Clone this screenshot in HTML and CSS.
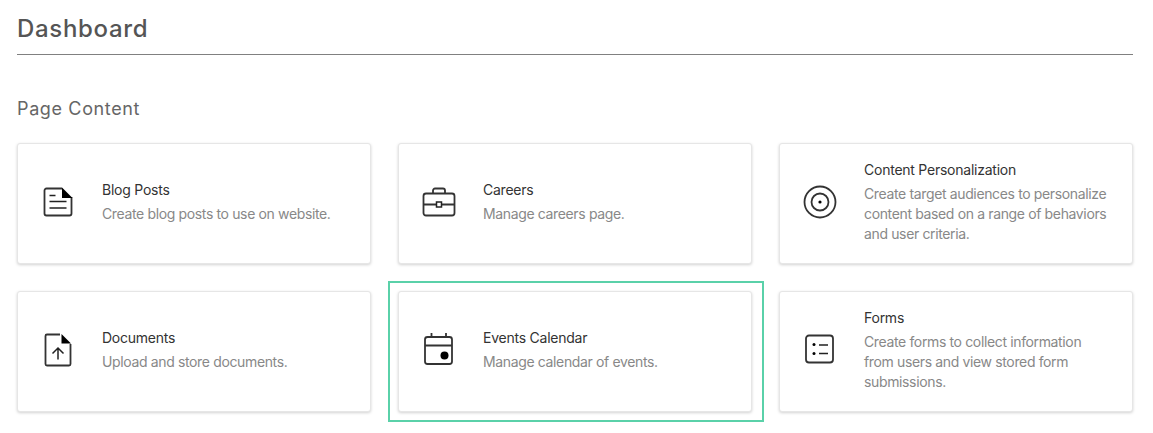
FILE: index.html
```html
<!DOCTYPE html>
<html lang="en">
<head>
<meta charset="utf-8">
<title>Dashboard</title>
<link rel="stylesheet" href="styles.css">
</head>
<body>
<main class="page">
  <h1 class="page-title">Dashboard</h1>
  <h2 class="section-title">Page Content</h2>
  <section class="grid">
    <a class="card">
      <svg class="icon" viewBox="0 0 36 36"><path class="s" d="M22 4.500H6.500a2 2 0 0 0-2 2v23a2 2 0 0 0 2 2h23a2 2 0 0 0 2-2V13"/><path class="f" d="M22 3.500 32.500 14H22z"/><path class="t" d="M9.500 11.500h6M9.500 17.500h17M9.500 24h17"/></svg>
      <div class="body"><h3 class="name">Blog Posts</h3><p class="desc">Create blog posts to use on website.</p></div>
    </a>
    <a class="card">
      <svg class="icon" viewBox="0 0 36 36"><rect class="s" x="2.500" y="9.500" width="31" height="22" rx="2.500"/><path class="s" d="M12 9.500V6.500a2 2 0 0 1 2-2h8a2 2 0 0 1 2 2v3M2.500 20.500H15M21 20.500h12.500"/><rect class="t" x="15.500" y="18" width="5" height="5"/></svg>
      <div class="body"><h3 class="name">Careers</h3><p class="desc">Manage careers page.</p></div>
    </a>
    <a class="card">
      <svg class="icon" viewBox="0 0 36 36"><circle class="s" cx="18" cy="18" r="15.500"/><circle class="s" cx="18" cy="18" r="8.500"/><circle class="f" cx="18" cy="18" r="1.600"/></svg>
      <div class="body"><h3 class="name">Content Personalization</h3><p class="desc">Create target audiences to personalize content based on a range of behaviors and user criteria.</p></div>
    </a>
    <a class="card">
      <svg class="icon" viewBox="0 0 36 36"><path class="s" d="M20 2.500H7a1.500 1.500 0 0 0-1.500 1.500v28a1.500 1.500 0 0 0 1.500 1.500h22a1.500 1.500 0 0 0 1.500-1.500V12"/><path class="f" d="M21.500 2 31 11.500h-9.500z"/><path class="t" d="M18 27.500V16M12.500 21.500 18 16l5.500 5.500"/></svg>
      <div class="body"><h3 class="name">Documents</h3><p class="desc">Upload and store documents.</p></div>
    </a>
    <a class="card card-highlight">
      <svg class="icon" viewBox="0 0 36 36"><rect class="s" x="4" y="5" width="27" height="27" rx="2.500"/><path class="s" d="M4 13.500h27M10.500 1v4M25 1v4"/><circle class="f" cx="23.500" cy="23.500" r="4"/></svg>
      <div class="body"><h3 class="name">Events Calendar</h3><p class="desc">Manage calendar of events.</p></div>
    </a>
    <a class="card">
      <svg class="icon" viewBox="0 0 36 36"><rect class="s" x="4" y="3.500" width="27" height="27" rx="3"/><circle class="f" cx="12" cy="12.500" r="1.500"/><circle class="f" cx="12" cy="21.500" r="1.500"/><path class="t" d="M17 13h9M17 21.500h9"/></svg>
      <div class="body"><h3 class="name">Forms</h3><p class="desc">Create forms to collect information from users and view stored form submissions.</p></div>
    </a>
  </section>
</main>
</body>
</html>
```
FILE: styles.css
```css
* { box-sizing: border-box; }
html, body { margin: 0; background: #fff; }
body { font-family: Inter, "Open Sans", sans-serif; color: #555; }
.page { min-height: 433px; padding: 0 20px 0 17px; }
.page-title {
  margin: 0;
  height: 55px;
  padding-top: 14px;
  font-size: 24px;
  line-height: 30px;
  font-weight: 500;
  letter-spacing: 0.68px;
  color: #555;
  border-bottom: 1px solid #808080;
}
.section-title {
  margin: 41px 0 21px;
  font-size: 18px;
  line-height: 26px;
  font-weight: 400;
  letter-spacing: 0.63px;
  color: #666;
}
.grid {
  display: grid;
  grid-template-columns: repeat(3, 354px);
  grid-auto-rows: 121px;
  column-gap: 27px;
  row-gap: 27px;
}
.card {
  position: relative;
  display: flex;
  align-items: center;
  gap: 26px;
  padding: 0 22px 3px 22px;
  background: #fff;
  border: 1px solid #e6e6e6;
  border-radius: 3px;
  box-shadow: 0 1px 3px rgba(0, 0, 0, 0.18);
}
.card-highlight::after {
  content: "";
  position: absolute;
  top: -11px;
  left: -11px;
  right: -13px;
  bottom: -11px;
  border: 2px solid #5ad1a9;
}
.icon { flex: none; width: 36px; height: 36px; }
.s, .t { fill: none; stroke: #333; stroke-width: 1.8; }
.t { stroke: #222; stroke-width: 1.5; }
.f { fill: #000; }
.name {
  margin: 0 0 4px;
  font-size: 14px;
  line-height: 20px;
  font-weight: 400;
  letter-spacing: -0.24px;
  color: #333;
}
.desc {
  margin: 0;
  font-size: 14px;
  line-height: 20px;
  letter-spacing: -0.36px;
  color: #888;
}
```
